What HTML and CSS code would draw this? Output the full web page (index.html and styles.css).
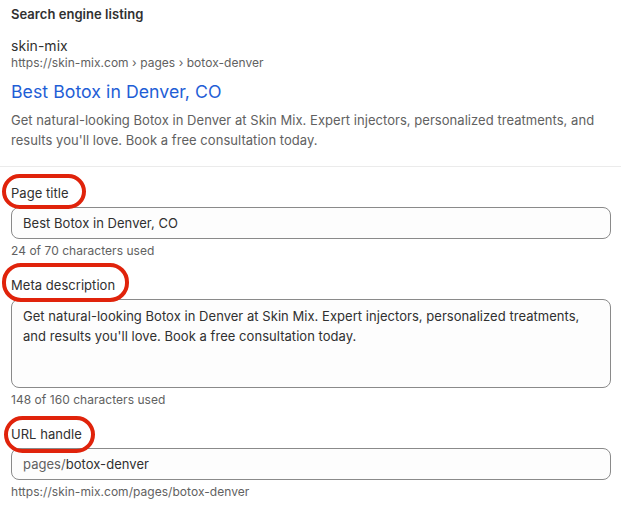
FILE: index.html
```html
<!DOCTYPE html>
<html>
<head>
<meta charset="utf-8">
<link rel="stylesheet" href="styles.css">
</head>
<body>
<section class="preview">
  <h2 class="heading">Search engine listing</h2>
  <div class="site">skin-mix</div>
  <div class="crumbs">https://skin-mix.com › pages › botox-denver</div>
  <div class="serp-title">Best Botox in Denver, CO</div>
  <p class="serp-desc">Get natural-looking Botox in Denver at Skin Mix. Expert injectors, personalized treatments, and results you'll love. Book a free consultation today.</p>
</section>
<section class="form">
  <div class="field">
    <label class="label"><span class="mark mark-title"></span>Page title</label>
    <div class="input">Best Botox in Denver, CO</div>
    <div class="help">24 of 70 characters used</div>
  </div>
  <div class="field">
    <label class="label"><span class="mark mark-meta"></span>Meta description</label>
    <div class="input textarea">Get natural-looking Botox in Denver at Skin Mix. Expert injectors, personalized treatments, and results you'll love. Book a free consultation today.</div>
    <div class="help">148 of 160 characters used</div>
  </div>
  <div class="field">
    <label class="label"><span class="mark mark-url"></span>URL handle</label>
    <div class="input"><span class="prefix">pages/</span>botox-denver</div>
    <div class="help">https://skin-mix.com/pages/botox-denver</div>
  </div>
</section>
</body>
</html>
```
FILE: styles.css
```css
* { box-sizing: border-box; }
html, body { margin: 0; padding: 0; background: #ffffff; }
body {
  font-family: Inter, "Noto Sans", sans-serif;
  color: #303030;
  width: 621px;
  letter-spacing: 0.04px;
  -webkit-font-smoothing: antialiased;
}
.preview {
  padding: 4px 11px 16px;
  border-bottom: 1px solid #ebebeb;
}
.heading {
  margin: 0;
  font-size: 13px;
  line-height: 20px;
  font-weight: 600;
  color: #303030;
}
.site {
  margin-top: 12px;
  font-size: 14px;
  line-height: 19px;
  color: #303030;
}
.crumbs {
  font-size: 12px;
  line-height: 16px;
  color: #616161;
}
.serp-title {
  margin-top: 9px;
  font-size: 17.7px;
  line-height: 24px;
  color: #1f5ed6;
}
.serp-desc {
  margin: 6px 0 0;
  font-size: 13px;
  line-height: 20px;
  color: #616161;
  padding-right: 10px;
}
.form {
  padding: 16px 10px 0 11px;
  display: flex;
  flex-direction: column;
  gap: 16px;
}
.field {
  display: flex;
  flex-direction: column;
}
.label {
  position: relative;
  font-size: 13px;
  line-height: 20px;
  color: #303030;
  margin-bottom: 4px;
  align-self: flex-start;
}
.mark {
  position: absolute;
  border: 4px solid #e0230b;
  border-radius: 19px;
  pointer-events: none;
}
.mark-title { left: -9px; top: -9px; width: 84px; height: 35px; }
.mark-meta { left: -9px; top: -12px; width: 127px; height: 39px; }
.mark-url { left: -7px; top: -8px; width: 91px; height: 37px; }
.input {
  border: 1px solid #8a8a8a;
  border-radius: 8px;
  background: #fdfdfd;
  height: 32px;
  padding: 5px 11px;
  font-size: 13px;
  line-height: 20px;
  color: #303030;
}
.textarea {
  height: 89px;
  padding: 6px 28px 6px 11px;
}
.prefix { color: #616161; }
.help {
  margin-top: 4px;
  font-size: 12px;
  line-height: 16px;
  color: #616161;
}
```
